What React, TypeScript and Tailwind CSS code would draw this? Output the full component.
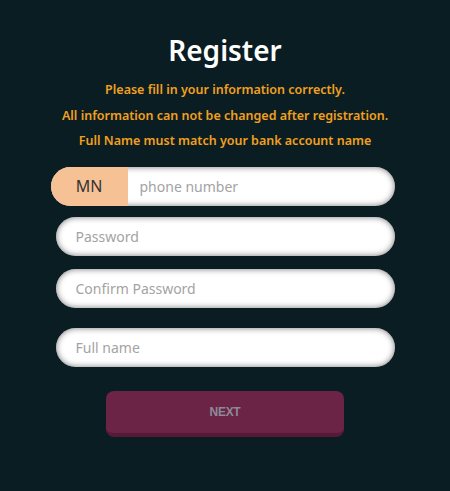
import { useState } from "react";

const fieldShadow = "shadow-[inset_0_0_6px_rgba(0,0,0,0.55)]";

function TextField({ placeholder, type = "text" }: { placeholder: string; type?: string }) {
  const [value, setValue] = useState("");
  return (
    <div className={`h-[39px] rounded-full bg-white ${fieldShadow} flex items-center`}>
      <input
        type={type}
        value={value}
        onChange={(e) => setValue(e.target.value)}
        placeholder={placeholder}
        className="w-full h-full bg-transparent px-5 text-[14px] text-gray-700 placeholder:text-[#a3a3a3] outline-none"
      />
    </div>
  );
}

export default function App() {
  const [phone, setPhone] = useState("");

  return (
    <div
      className="w-[450px] h-[491px] bg-[#0a1d23] flex flex-col items-center pt-[32px]"
      style={{ fontFamily: '"Noto Sans", "Open Sans", sans-serif' }}
    >
      <h1 className="text-[28px] font-semibold text-white leading-[36px]">Register</h1>

      <div className="mt-[9px] flex flex-col items-center text-[12.5px] font-semibold text-[#f2a01e] leading-[25.5px]">
        <p>Please fill in your information correctly.</p>
        <p>All information can not be changed after registration.</p>
        <p>Full Name must match your bank account name</p>
      </div>

      <div className="mt-[13px] w-[339px] flex flex-col">
        <div className={`-ml-[5px] h-[39px] rounded-full bg-white ${fieldShadow} flex items-center overflow-hidden`}>
          <div className="w-[77px] h-full bg-[#f5c195] flex items-center justify-center text-[16px] text-[#333333]">
            MN
          </div>
          <input
            value={phone}
            onChange={(e) => setPhone(e.target.value)}
            placeholder="phone number"
            className="flex-1 h-full bg-transparent px-3 text-[14px] text-gray-700 placeholder:text-[#a3a3a3] outline-none"
          />
        </div>

        <div className="mt-[11px]">
          <TextField placeholder="Password" type="password" />
        </div>
        <div className="mt-[13px]">
          <TextField placeholder="Confirm Password" type="password" />
        </div>
        <div className="mt-[20px]">
          <TextField placeholder="Full name" />
        </div>
      </div>

      <button
        type="button"
        className="mt-[24px] w-[238px] h-[46px] rounded-[8px] bg-[#6b2445] border-b-[4px] border-[#561a37] text-[12px] font-bold text-[#8c8a99] tracking-tight"
        style={{ fontFamily: '"Liberation Sans", Arial, sans-serif' }}
      >
        NEXT
      </button>
    </div>
  );
}
